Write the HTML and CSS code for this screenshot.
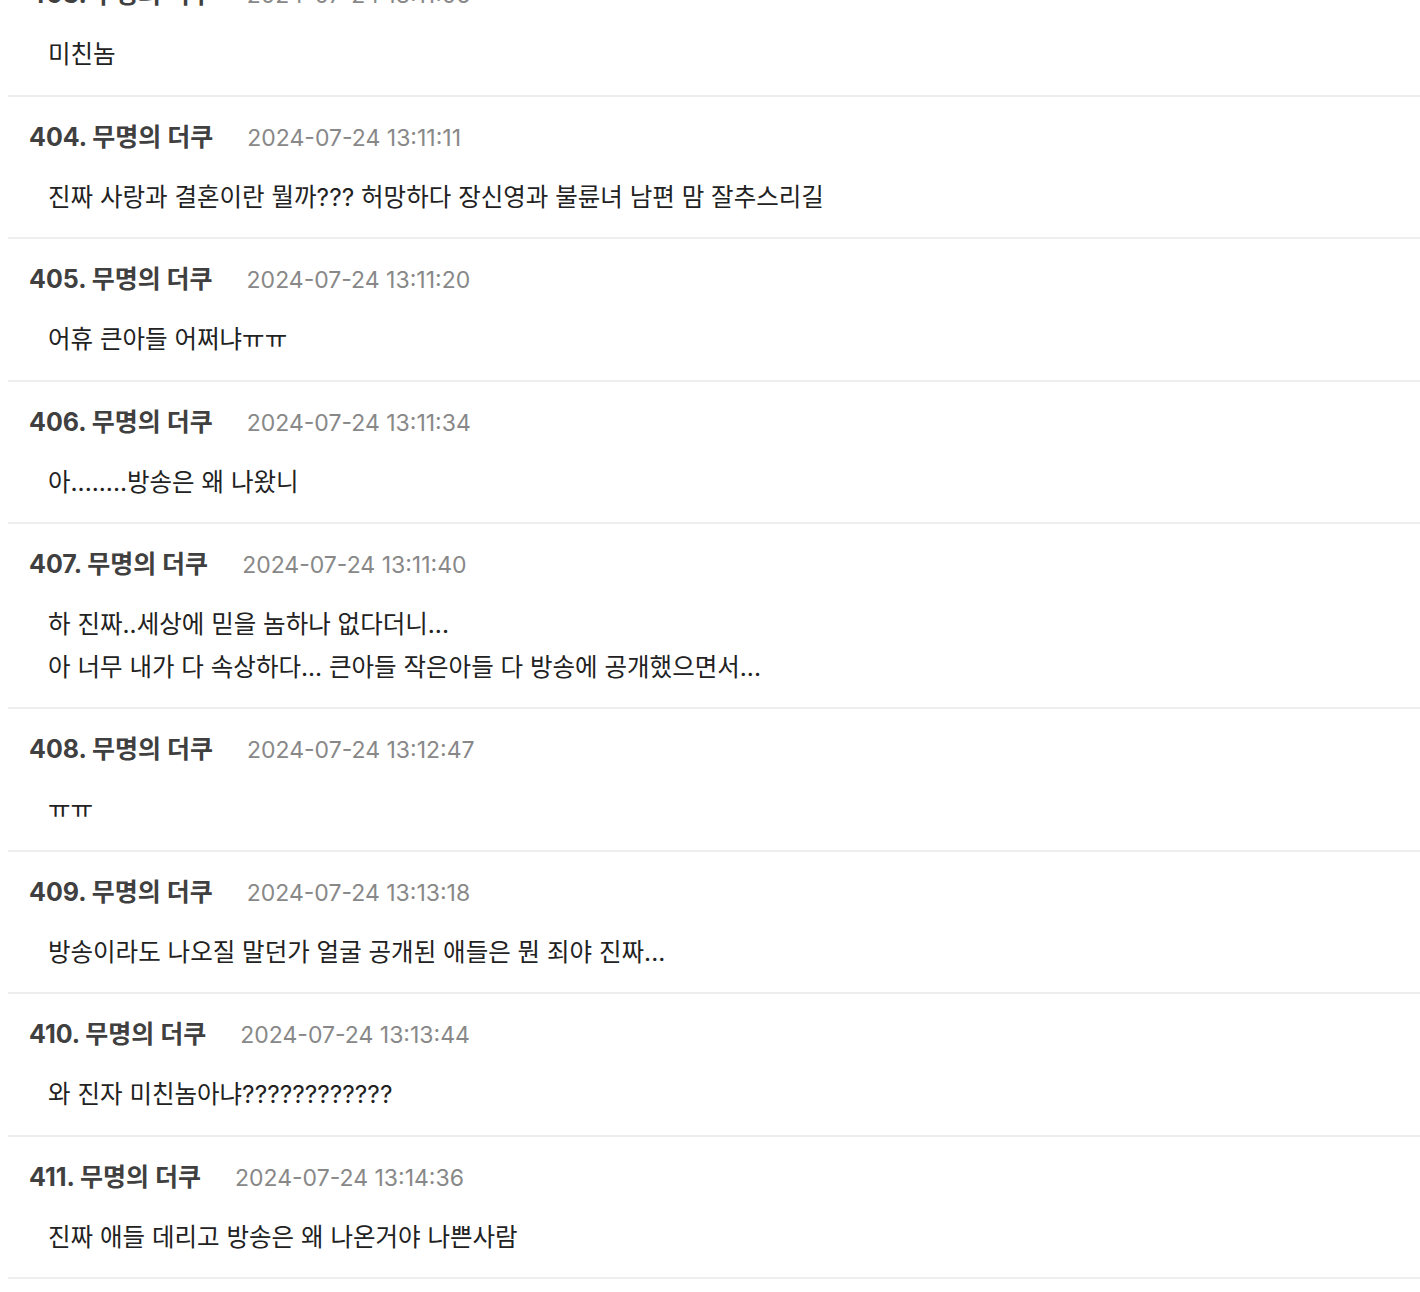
FILE: index.html
```html
<!DOCTYPE html>
<html lang="ko">
<head>
    <meta charset="UTF-8">
    <meta name="viewport" content="width=device-width, initial-scale=1.0">
    <title>댓글</title>
    <link rel="stylesheet" href="styles.css">
</head>
<body>
    <ul class="comments">
        <li class="comment">
            <div class="comment-head"><span class="writer">403. 무명의 더쿠</span><span class="date">2024-07-24 13:11:06</span></div>
            <p class="comment-body">미친놈</p>
        </li>
        <li class="comment">
            <div class="comment-head"><span class="writer">404. 무명의 더쿠</span><span class="date">2024-07-24 13:11:11</span></div>
            <p class="comment-body">진짜 사랑과 결혼이란 뭘까??? 허망하다 장신영과 불륜녀 남편 맘 잘추스리길</p>
        </li>
        <li class="comment">
            <div class="comment-head"><span class="writer">405. 무명의 더쿠</span><span class="date">2024-07-24 13:11:20</span></div>
            <p class="comment-body">어휴 큰아들 어쩌냐ㅠㅠ</p>
        </li>
        <li class="comment">
            <div class="comment-head"><span class="writer">406. 무명의 더쿠</span><span class="date">2024-07-24 13:11:34</span></div>
            <p class="comment-body">아........방송은 왜 나왔니</p>
        </li>
        <li class="comment">
            <div class="comment-head"><span class="writer">407. 무명의 더쿠</span><span class="date">2024-07-24 13:11:40</span></div>
            <p class="comment-body">하 진짜..세상에 믿을 놈하나 없다더니...<br>아 너무 내가 다 속상하다... 큰아들 작은아들 다 방송에 공개했으면서...</p>
        </li>
        <li class="comment">
            <div class="comment-head"><span class="writer">408. 무명의 더쿠</span><span class="date">2024-07-24 13:12:47</span></div>
            <p class="comment-body">ㅠㅠ</p>
        </li>
        <li class="comment">
            <div class="comment-head"><span class="writer">409. 무명의 더쿠</span><span class="date">2024-07-24 13:13:18</span></div>
            <p class="comment-body">방송이라도 나오질 말던가 얼굴 공개된 애들은 뭔 죄야 진짜...</p>
        </li>
        <li class="comment">
            <div class="comment-head"><span class="writer">410. 무명의 더쿠</span><span class="date">2024-07-24 13:13:44</span></div>
            <p class="comment-body">와 진자 미친놈아냐????????????</p>
        </li>
        <li class="comment">
            <div class="comment-head"><span class="writer">411. 무명의 더쿠</span><span class="date">2024-07-24 13:14:36</span></div>
            <p class="comment-body">진짜 애들 데리고 방송은 왜 나온거야 나쁜사람</p>
        </li>
    </ul>
</body>
</html>
```

FILE: styles.css
```css
body {
    margin: 0 0 0 8px;
    background: #fff;
    font-family: Inter, "Noto Sans CJK KR", sans-serif;
    color: #222;
    overflow: hidden;
}

.comments {
    list-style: none;
    margin: -46px 0 0;
    padding: 0;
}

.comment {
    padding: 25px 0 19px;
    border-bottom: 2px solid #eee;
}

.comment-head {
    display: flex;
    align-items: baseline;
    gap: 34px;
    padding-left: 21px;
    line-height: 30px;
}

.writer {
    font-size: 25px;
    font-weight: 700;
    color: #404040;
}

.date {
    font-size: 23px;
    color: #888;
}

.comment-body {
    margin: 23px 0 0;
    padding-left: 40px;
    font-size: 24.5px;
    line-height: 42.5px;
    color: #222;
}
```
